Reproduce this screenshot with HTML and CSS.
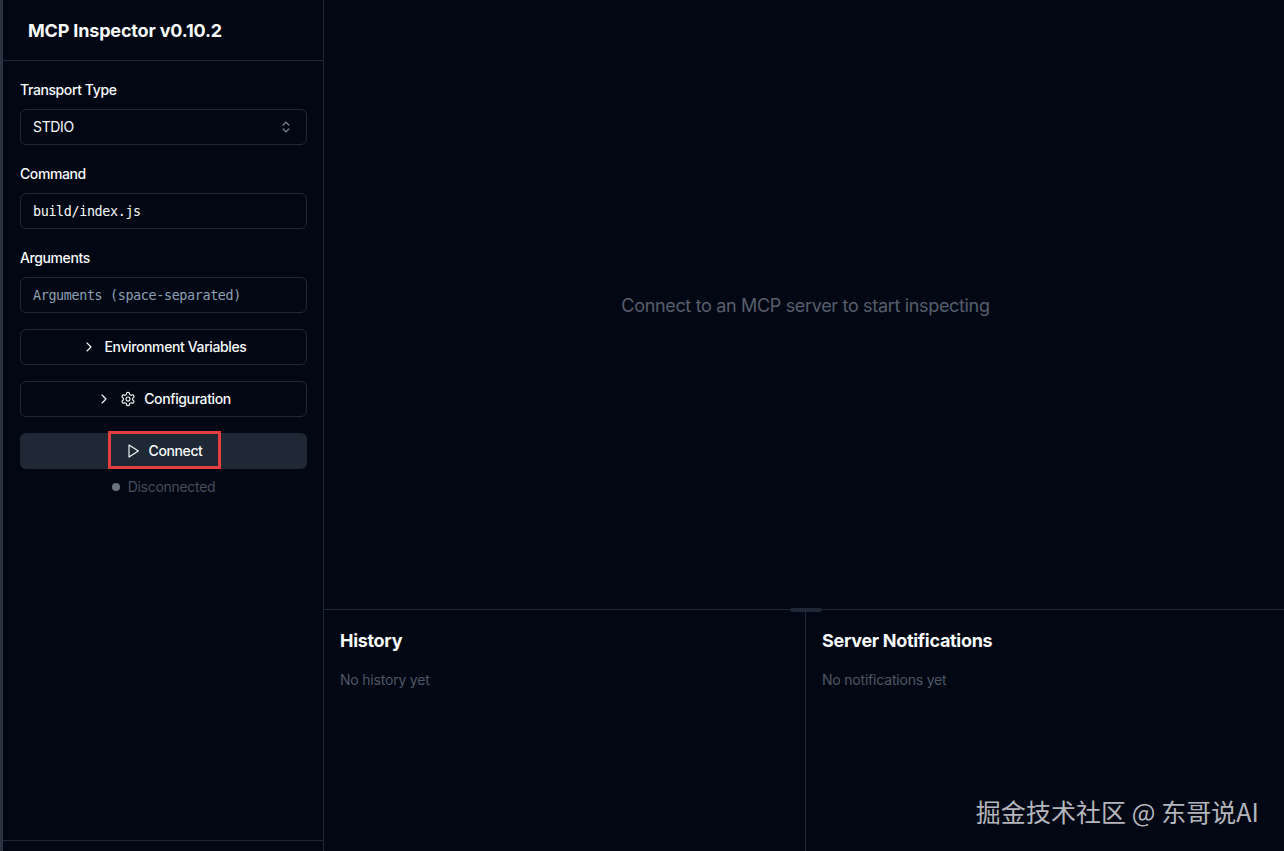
FILE: index.html
```html
<!DOCTYPE html>
<html lang="en">
<head>
<meta charset="utf-8">
<title>MCP Inspector</title>
<link rel="stylesheet" href="styles.css">
</head>
<body>
<div class="app">
  <aside class="sidebar">
    <header class="brand"><h1>MCP Inspector v0.10.2</h1></header>
    <div class="form">
      <div class="field">
        <label>Transport Type</label>
        <div class="control select">
          <span class="txt">STDIO</span>
          <svg class="updown" viewBox="0 0 12 16"><path d="m3.2 10 2.8 2.8 2.8-2.8"/><path d="m3.2 6 2.8-2.8 2.8 2.8"/></svg>
        </div>
      </div>
      <div class="field">
        <label>Command</label>
        <div class="control mono">build/index.js</div>
      </div>
      <div class="field">
        <label>Arguments</label>
        <div class="control mono placeholder">Arguments (space-separated)</div>
      </div>
      <button class="btn outline">
        <svg class="icon" viewBox="0 0 24 24"><path d="m9 18 6-6-6-6"/></svg>
        <span class="txt">Environment Variables</span>
      </button>
      <button class="btn outline">
        <svg class="icon" viewBox="0 0 24 24"><path d="m9 18 6-6-6-6"/></svg>
        <svg class="icon" viewBox="0 0 24 24"><path d="M12.22 2h-.44a2 2 0 0 0-2 2v.18a2 2 0 0 1-1 1.73l-.43.25a2 2 0 0 1-2 0l-.15-.08a2 2 0 0 0-2.73.73l-.22.38a2 2 0 0 0 .73 2.73l.15.1a2 2 0 0 1 1 1.72v.51a2 2 0 0 1-1 1.74l-.15.09a2 2 0 0 0-.73 2.73l.22.38a2 2 0 0 0 2.73.73l.15-.08a2 2 0 0 1 2 0l.43.25a2 2 0 0 1 1 1.73V20a2 2 0 0 0 2 2h.44a2 2 0 0 0 2-2v-.18a2 2 0 0 1 1-1.73l.43-.25a2 2 0 0 1 2 0l.15.08a2 2 0 0 0 2.73-.73l.22-.39a2 2 0 0 0-.73-2.73l-.15-.08a2 2 0 0 1-1-1.74v-.5a2 2 0 0 1 1-1.74l.15-.09a2 2 0 0 0 .73-2.73l-.22-.38a2 2 0 0 0-2.73-.73l-.15.08a2 2 0 0 1-2 0l-.43-.25a2 2 0 0 1-1-1.73V4a2 2 0 0 0-2-2z"/><circle cx="12" cy="12" r="3"/></svg>
        <span class="txt">Configuration</span>
      </button>
      <button class="btn primary">
        <span class="highlight">
          <svg class="icon play" viewBox="0 0 24 24"><path d="M6 3l14 9-14 9z"/></svg>
          <span class="txt">Connect</span>
        </span>
      </button>
      <div class="status"><i class="dot"></i><span class="txt">Disconnected</span></div>
    </div>
    <div class="sidebar-foot"></div>
  </aside>
  <main class="main">
    <section class="stage"><p>Connect to an MCP server to start inspecting</p></section>
    <section class="panels">
      <span class="handle"></span>
      <div class="panel">
        <h2>History</h2>
        <p>No history yet</p>
      </div>
      <div class="panel">
        <h2>Server Notifications</h2>
        <p>No notifications yet</p>
      </div>
      <span class="watermark">掘金技术社区 @ 东哥说AI</span>
    </section>
  </main>
</div>
</body>
</html>
```

FILE: styles.css
```css
* { box-sizing: border-box; }
html, body { margin: 0; height: 100%; }
body {
  background: #020813;
  color: #f8fafc;
  font-family: Inter, "Noto Sans", sans-serif;
  font-size: 14px;
  overflow: hidden;
}
.app {
  display: flex;
  height: 851px;
  border-left: 3px solid #2a3342;
}
.sidebar {
  width: 321px;
  flex: none;
  display: flex;
  flex-direction: column;
  border-right: 1px solid #1e2836;
}
.brand {
  height: 61px;
  flex: none;
  display: flex;
  align-items: center;
  padding: 2px 0 0 25px;
  border-bottom: 1px solid #1e2836;
}
.brand h1 { margin: 0; font-size: 18px; font-weight: 700; line-height: 28px; letter-spacing: -0.17px; }
.form {
  flex: 1;
  padding: 19px 16px 0 17px;
  display: flex;
  flex-direction: column;
  gap: 16px;
}
.field { display: flex; flex-direction: column; gap: 9px; }
.field + .field { margin-top: 3px; }
.field label { font-weight: 450; line-height: 20px; letter-spacing: -0.4px; }
.control {
  height: 36px;
  border: 1px solid #1e2836;
  border-radius: 6px;
  padding: 0 12px;
  display: flex;
  align-items: center;
  justify-content: space-between;
}
.txt { margin-bottom: 2px; }
.select .txt { letter-spacing: -0.35px; }
.mono {
  font-family: "DejaVu Sans Mono", "Liberation Mono", monospace;
  font-size: 13.4px;
  letter-spacing: -0.36px;
}
.placeholder { color: #8fa0b5; }
.updown { width: 12px; height: 16px; margin-right: 2px; fill: none; stroke: #7f8a9a; stroke-width: 1.2; stroke-linecap: round; stroke-linejoin: round; }
.btn {
  height: 36px;
  width: 100%;
  border-radius: 6px;
  font: inherit;
  font-weight: 500;
  letter-spacing: -0.38px;
  color: #f8fafc;
  display: flex;
  align-items: center;
  justify-content: center;
  gap: 8px;
  padding: 0;
  flex: none;
}
.outline { background: #020813; border: 1px solid #1e2836; }
.primary { background: #1e2935; border: 0; }
.icon { width: 16px; height: 16px; fill: none; stroke: currentColor; stroke-width: 1.7; stroke-linecap: round; stroke-linejoin: round; }
.highlight {
  display: flex;
  align-items: center;
  justify-content: center;
  gap: 8px;
  width: 113px;
  height: 38px;
  margin: 0 0 2px 2px;
  padding: 2px 2px 0 0;
  border: 3px solid #e53e3e;
}
.status {
  display: flex;
  align-items: center;
  justify-content: center;
  gap: 8px;
  height: 20px;
  margin-top: -8px;
  color: #464c59;
  letter-spacing: -0.3px;
}
.dot { width: 8px; height: 8px; border-radius: 50%; background: #6b7280; }
.sidebar-foot { height: 11px; flex: none; border-top: 1px solid #1e2836; }
.main { flex: 1; min-width: 0; display: flex; flex-direction: column; }
.stage {
  height: 609px;
  flex: none;
  display: flex;
  align-items: center;
  justify-content: center;
  padding: 1px 0 0 3px;
}
.stage p { margin: 0; font-size: 18px; color: #565e6d; letter-spacing: -0.33px; }
.panels {
  position: relative;
  flex: 1;
  display: grid;
  grid-template-columns: 482px 1fr;
  border-top: 1px solid #1e2836;
}
.handle {
  position: absolute;
  left: 466px;
  top: -2px;
  width: 32px;
  height: 4px;
  border-radius: 2px;
  background: #1e2836;
}
.panel { padding: 16px; }
.panel:first-of-type { border-right: 1px solid #1e2836; }
.panel h2 { margin: 1px 0 0; font-size: 18px; font-weight: 700; line-height: 28px; letter-spacing: -0.3px; }
.panel p { margin: 15px 0 0; font-size: 14px; line-height: 20px; color: #4f5666; letter-spacing: -0.2px; }
.watermark {
  position: absolute;
  right: 25px;
  bottom: 23px;
  font-family: "Noto Sans CJK SC", "Noto Sans", sans-serif;
  font-size: 25px;
  line-height: 34px;
  letter-spacing: 0.06px;
  color: #b5b5bc;
}
```
